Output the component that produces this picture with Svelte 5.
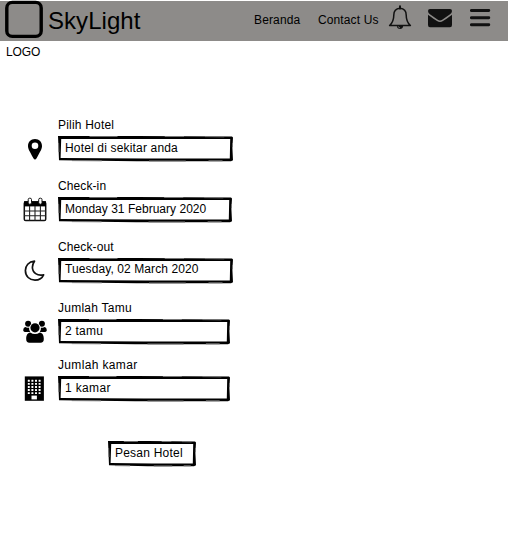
<script>
  const fields = [
    { icon: 'pin', label: 'Pilih Hotel', value: 'Hotel di sekitar anda', width: 175, height: 61, ls: 0.17, lls: 0.2, top: 5 },
    { icon: 'calendar', label: 'Check-in', value: 'Monday 31 February 2020', width: 174, height: 61, ls: 0.02, lls: 0.1, top: 5 },
    { icon: 'moon', label: 'Check-out', value: 'Tuesday, 02 March 2020', width: 175, height: 61, ls: 0.1, lls: 0.12, top: 4 },
    { icon: 'users', label: 'Jumlah Tamu', value: '2 tamu', width: 172, height: 57, ls: 0.25, lls: 0.25, top: 5 },
    { icon: 'building', label: 'Jumlah kamar', value: '1 kamar', width: 172, height: 57, ls: 0.35, lls: 0.35, top: 5 }
  ];
  const windows = [0, 1, 2, 3, 4].flatMap((r) => [0, 1, 2, 3].map((c) => ({ x: 4 + c * 3.6, y: 3.8 + r * 3.1 })));
</script>

{#snippet frame(w)}
  <svg class="frame" width={w} height="26" viewBox="0 0 {w} 26">
    <path fill-rule="evenodd" d="M0 0L{w * 0.45} 0L{w - 1} .5L{w} 1.5L{w - 0.6} 12L{w} 24.3L{w - 2} 25.2L{w * 0.45} 25.3L1 24.2L.6 14ZM3.2 2.9L2.6 21.9L{w * 0.5} 22.4L{w - 3.2} 22.4L{w - 2.8} 3.1L{w * 0.3} 2.9Z" />
    <path class="worn" d="M{w * 0.18} .4L{w * 0.34} .4M{w * 0.61} .5L{w * 0.72} .5M{w * 0.84} .6L{w * 0.95} .8M{w * 0.08} 24.6L{w * 0.25} 24.8M{w * 0.52} 25L{w * 0.73} 25M{w * 0.86} 24.8L{w * 0.94} 24.8M.6 7L.9 16M{w - 0.5} 7L{w - 0.6} 11" />
  </svg>
{/snippet}

<div class="page">
  <header>
    <svg class="logo" width="40" height="39" viewBox="0 0 40 39">
      <rect x="2.8" y="2.4" width="34.4" height="34" rx="5.5" fill="none" stroke="#000" stroke-width="3.4" />
    </svg>
    <h1>SkyLight</h1>
    <nav>
      <a class="home" href="#beranda">Beranda</a>
      <a class="contact" href="#contact">Contact Us</a>
    </nav>
    <svg class="bell" width="24" height="26" viewBox="0 0 24 26">
      <path d="M12 3.2C7.8 3.6 5.8 6.5 5.8 10C5.8 15.2 4.2 18.2 1.6 20.6H22.4C19.8 18.2 18.2 15.2 18.2 10C18.2 6.5 16.2 3.6 12 3.2Z" fill="none" stroke="#111" stroke-width="1.5" stroke-linejoin="round" />
      <path d="M12 1.3V3.4" stroke="#111" stroke-width="2" stroke-linecap="round" />
      <path d="M8.8 21H15.2Q14.8 24 12 24Q9.2 24 8.8 21Z" fill="#111" />
      <path d="M10.1 21.2Q10.4 22.8 12 22.8" fill="none" stroke="#8d8b89" stroke-width=".7" />
    </svg>
    <svg class="mail" width="24" height="19" viewBox="0 0 24 19">
      <path fill="#111" d="M2 0H22Q24 0 24 2Q24 4 21.7 5.6L14.2 10.7Q12 12.3 9.8 10.7L2.3 5.6Q0 4 0 2Q0 0 2 0ZM0 5.8Q1 6.8 9 12.1Q12 14 15 12.1Q23 6.8 24 5.8V16Q24 18.3 22 18.3H2Q0 18.3 0 16Z" />
    </svg>
    <svg class="menu" width="21" height="18" viewBox="0 0 21 18">
      <path d="M1.4 1.5H18.8M1.4 8.7H18.8M1.4 15.7H18.8" stroke="#111" stroke-width="2.9" stroke-linecap="round" />
    </svg>
  </header>
  <p class="caption">LOGO</p>

  <main>
    {#each fields as f}
      <div class="row" style="height: {f.height}px">
        <div class="icon">
          {#if f.icon === 'pin'}
            <svg width="24" height="28" viewBox="0 0 24 28">
              <path fill-rule="evenodd" d="M12 3C7.7 3 5 6 5 10C5 13 6.4 14.7 10.4 22.2Q12 24.8 13.6 22.2C17.6 14.7 19 13 19 10C19 6 16.3 3 12 3ZM12 6.4A3.3 3.3 0 1 1 12 13A3.3 3.3 0 1 1 12 6.4Z" />
            </svg>
          {:else if f.icon === 'calendar'}
            <svg width="24" height="28" viewBox="0 0 24 28">
              <rect x="1.3" y="5" width="21.4" height="18.6" rx="1.4" fill="#fff" stroke="#111" stroke-width="1.5" />
              <path d="M1 4.2H23V9.4H1Z" />
              <path d="M6.6 9V23.6M12 9V23.6M17.4 9V23.6M1 14H23M1 18.8H23" stroke="#222" stroke-width="1.1" />
              <rect x="5.2" y="1.2" width="3.3" height="6" rx="1.4" fill="#fff" stroke="#111" />
              <rect x="15.7" y="1.2" width="3.3" height="6" rx="1.4" fill="#fff" stroke="#111" />
            </svg>
          {:else if f.icon === 'moon'}
            <svg width="24" height="28" viewBox="0 0 24 28">
              <path d="M11.5 3.2C5.6 3.6 2.4 7.8 2.4 12.6C2.4 18.3 6.5 22.1 12 22.1C16 22.1 19.2 20 20.6 16.8C14.4 18.2 9.4 14.8 9.4 9.2C9.4 7 10.2 5 11.5 3.2Z" fill="none" stroke="#111" stroke-width="1.7" stroke-linejoin="round" />
            </svg>
          {:else if f.icon === 'users'}
            <svg width="24" height="28" viewBox="0 0 24 28">
              <circle cx="5.1" cy="4.8" r="3" />
              <circle cx="18.9" cy="4.8" r="3" />
              <path d="M2.2 8.1Q4.5 9.4 6.2 8.4Q5.9 11 7.2 13H3Q.2 13 .2 11Q.4 8.4 2.2 8.1ZM21.8 8.1Q19.5 9.4 17.8 8.4Q18.1 11 16.8 13H21Q23.8 13 23.8 11Q23.6 8.4 21.8 8.1Z" />
              <circle cx="12" cy="9" r="5.5" fill="#fff" />
              <circle cx="12" cy="8.8" r="4.6" />
              <path d="M7.2 13.5Q12 16.6 16.8 13.5C19.6 13.8 20.8 16.6 20.8 20Q20.8 23.8 17.6 23.8H6.4Q3.2 23.8 3.2 20C3.2 16.6 4.4 13.8 7.2 13.5Z" />
            </svg>
          {:else}
            <svg width="24" height="28" viewBox="0 0 24 28">
              <path d="M1.8.4H20.9V24.8H1.8Z" />
              {#each windows as b}
                <rect x={b.x + 0.8} y={b.y} width="2" height="1.9" rx=".3" fill="#fff" />
              {/each}
              <rect x="8.5" y="19.6" width="5.4" height="3.8" fill="#fff" />
            </svg>
          {/if}
        </div>
        <div class="field">
          <span class="label" style="letter-spacing: {f.lls}px">{f.label}</span>
          <div class="box" style="width: {f.width}px">
            {@render frame(f.width)}
            <span style="letter-spacing: {f.ls}px; padding-top: {f.top}px">{f.value}</span>
          </div>
        </div>
      </div>
    {/each}
    <button class="box order">
      {@render frame(88)}
      <span>Pesan Hotel</span>
    </button>
  </main>
</div>

<style>
  :global(body) { margin: 0; background: #fff; }
  .page { display: flow-root; width: 508px; height: 534px; overflow: hidden; font: 12px/14px "Liberation Sans", Arial, sans-serif; color: #000; }
  header { display: flex; align-items: flex-start; height: 40px; margin-top: 1px; padding-left: 4px; background: #8d8b89; }
  svg { display: block; flex: none; }
  .logo { margin-top: -1px; }
  h1 { margin: 6px 0 0 4px; width: 96px; font-size: 24px; line-height: 28px; font-weight: 400; letter-spacing: .05px; white-space: nowrap; }
  nav { display: flex; width: 244px; margin-top: 12px; }
  a { color: #000; text-decoration: none; white-space: nowrap; }
  .home { margin-left: 110px; width: 64px; letter-spacing: .15px; }
  .contact { letter-spacing: .12px; }
  .bell { margin-top: 4px; }
  .mail { margin: 8px 0 0 16px; }
  .menu { margin: 8px 0 0 18px; }
  .caption { margin: 4px 0 0 6px; letter-spacing: -.1px; }
  main { padding: 59px 0 0 23px; }
  .row { display: flex; }
  .icon { width: 24px; margin: 18px 11px 0 0; }
  .field { display: flex; flex-direction: column; }
  .label { height: 18px; white-space: nowrap; }
  .box { position: relative; height: 26px; }
  .frame { position: absolute; left: 0; top: 0; }
  .worn { fill: none; stroke: #777; stroke-width: 1; }
  .box span { position: relative; display: block; padding-left: 7px; white-space: nowrap; }
  .order { display: flex; align-items: flex-start; width: 88px; margin: 26px 0 0 85px; padding: 0; border: 0; background: none; font: inherit; color: inherit; text-align: left; }
  .order span { padding-top: 5px; letter-spacing: .22px; }
</style>
